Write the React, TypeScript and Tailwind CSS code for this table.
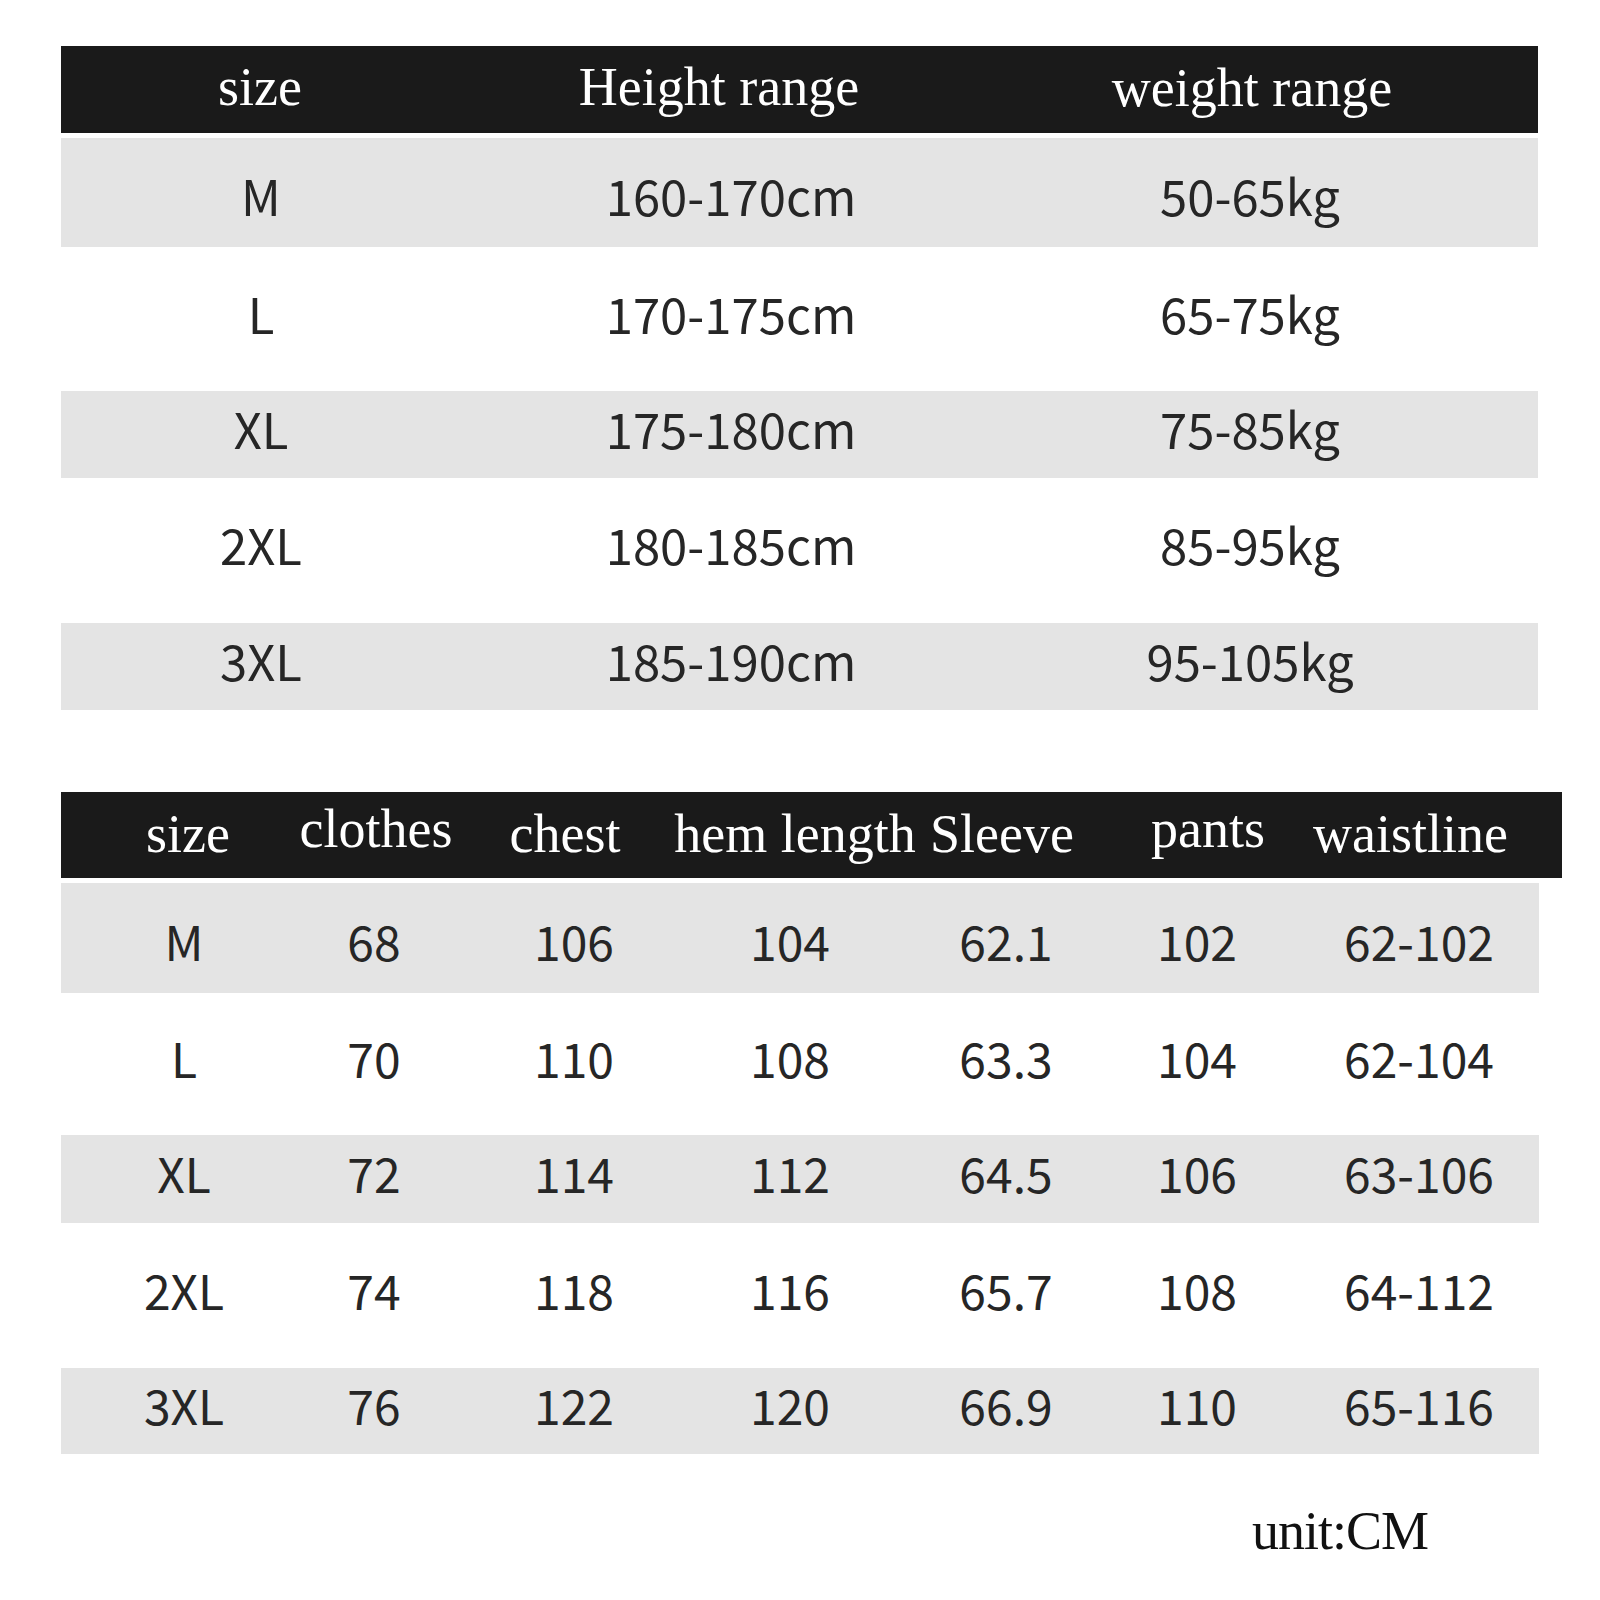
import React from "react";

const serif = { fontFamily: '"Liberation Serif", "Times New Roman", serif' };
const sans = { fontFamily: '"Noto Sans CJK SC", "Noto Sans", sans-serif' };

const top = [
  ["M", "160-170cm", "50-65kg"],
  ["L", "170-175cm", "65-75kg"],
  ["XL", "175-180cm", "75-85kg"],
  ["2XL", "180-185cm", "85-95kg"],
  ["3XL", "185-190cm", "95-105kg"],
];

const bottom = [
  ["M", "68", "106", "104", "62.1", "102", "62-102"],
  ["L", "70", "110", "108", "63.3", "104", "62-104"],
  ["XL", "72", "114", "112", "64.5", "106", "63-106"],
  ["2XL", "74", "118", "116", "65.7", "108", "64-112"],
  ["3XL", "76", "122", "120", "66.9", "110", "65-116"],
];

const topRowCls = [
  "h-[109px] bg-[#e4e4e4] pt-[18px]",
  "h-[144px] bg-white",
  "h-[87px] bg-[#e4e4e4]",
  "h-[145px] bg-white",
  "h-[87px] bg-[#e4e4e4]",
];

const botRowCls = [
  "h-[110px] bg-[#e4e4e4] pt-[18px]",
  "h-[142px] bg-white",
  "h-[88px] bg-[#e4e4e4]",
  "h-[145px] bg-white",
  "h-[86px] bg-[#e4e4e4]",
];

const topCols = "grid grid-cols-[398px_534px_522px_1fr]";
const botCols = "grid grid-cols-[250px_130px_260px_194px_226px_174px_1fr]";

function Cell({ children, className = "" }: { children: React.ReactNode; className?: string }) {
  return (
    <div className={"flex items-center justify-center whitespace-nowrap " + className}>
      <span>{children}</span>
    </div>
  );
}

export default function App() {
  return (
    <div className="w-[1600px] h-[1600px] bg-white relative">
      <div className="pt-[46px] pl-[61px]">
        {/* Top table */}
        <div className="w-[1477px]">
          <div className={topCols + " h-[87px] bg-[#1a1a1a] text-white text-[54px] leading-none"} style={serif}>
            <Cell className="pb-[6px]">size</Cell>
            <Cell className="pb-[6px] pr-[14px]">Height range</Cell>
            <Cell className="pb-[4px] pr-[4px]">weight range</Cell>
            <div />
          </div>
          <div className="h-[5px]" />
          {top.map((r, i) => (
            <div key={i} className={topCols + " text-[#262626] text-[49px] leading-none " + topRowCls[i]} style={sans}>
              <Cell className="pb-[14px] pl-[2px]">{r[0]}</Cell>
              <Cell className="pb-[14px] pl-[10px]">{r[1]}</Cell>
              <Cell className="pb-[14px] pr-[8px]">{r[2]}</Cell>
              <div />
            </div>
          ))}
        </div>

        <div className="h-[82px]" />

        {/* Bottom table */}
        <div className="w-[1501px]">
          <div className={botCols + " h-[86px] bg-[#1a1a1a] text-white text-[54px] leading-none"} style={serif}>
            <Cell className="pb-[2px] pl-[4px]">size</Cell>
            <Cell className="pb-[12px]">clothes</Cell>
            <Cell className="pb-[2px] pr-[12px]">chest</Cell>
            <Cell className="pb-[2px] pr-[6px]">hem length</Cell>
            <Cell className="pb-[2px] pr-[12px]">Sleeve</Cell>
            <Cell className="pb-[12px]">pants</Cell>
            <Cell className="pb-[2px] pr-[36px]">waistline</Cell>
          </div>
          <div className="h-[5px]" />
          <div className="w-[1478px]">
            {bottom.map((r, i) => (
              <div key={i} className={botCols + " text-[#262626] text-[48px] leading-none " + botRowCls[i]} style={sans}>
                <Cell className="pb-[14px] pr-[4px]">{r[0]}</Cell>
                <Cell className="pb-[14px] pr-[4px]">{r[1]}</Cell>
                <Cell className="pb-[14px] pl-[6px]">{r[2]}</Cell>
                <Cell className="pb-[14px] pr-[16px]">{r[3]}</Cell>
                <Cell className="pb-[14px] pr-[4px]">{r[4]}</Cell>
                <Cell className="pb-[14px] pr-[22px]">{r[5]}</Cell>
                <Cell className="pb-[14px] pl-[4px]">{r[6]}</Cell>
              </div>
            ))}
          </div>
        </div>

        <div className="flex justify-end w-[1477px] pt-[50px] pr-[110px]">
          <span className="text-[54px] leading-none text-[#111] tracking-[-1px]" style={serif}>
            unit:CM
          </span>
        </div>
      </div>
    </div>
  );
}
